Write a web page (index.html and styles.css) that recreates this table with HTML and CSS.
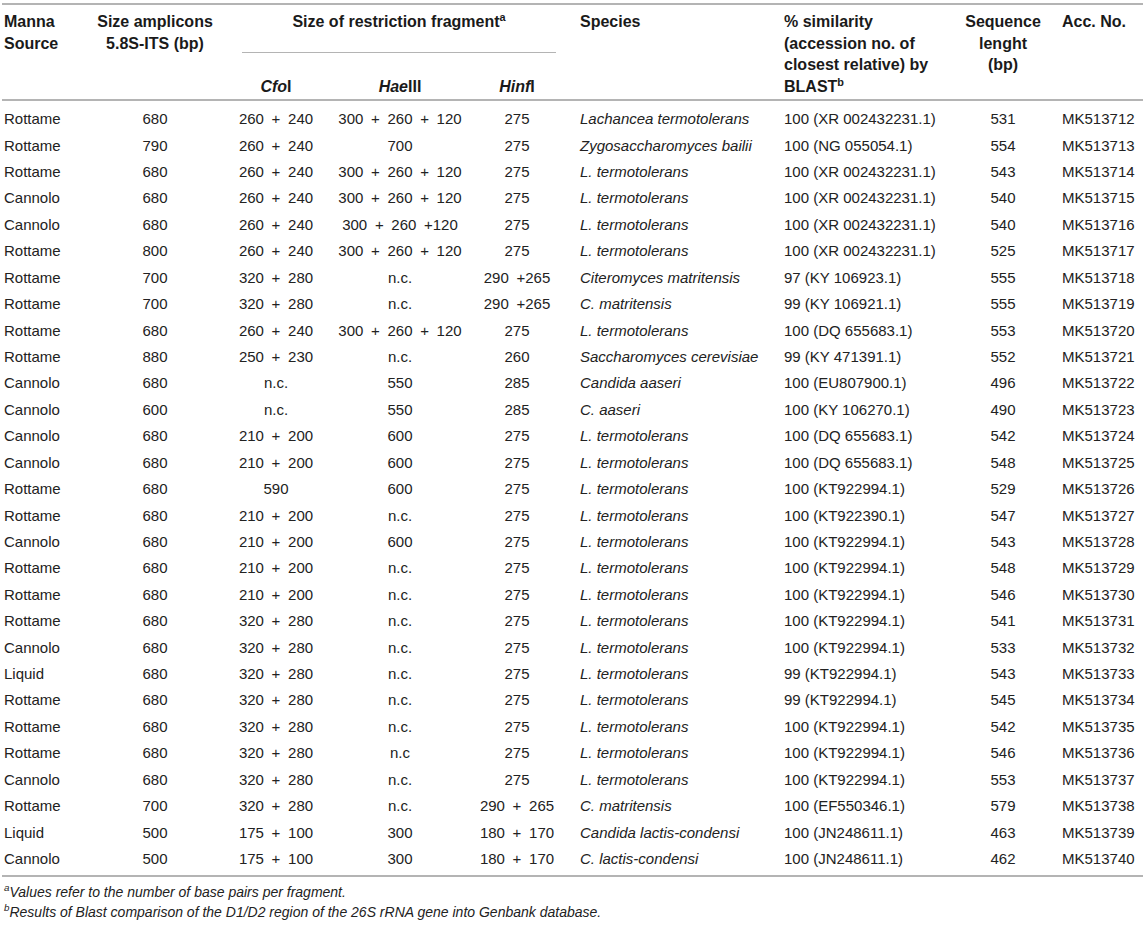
FILE: index.html
```html
<!DOCTYPE html>
<html lang="en">
<head>
<meta charset="utf-8">
<title>Yeast isolates from manna</title>
<link rel="stylesheet" href="styles.css">
</head>
<body>
<table class="tbl">
  <colgroup>
    <col class="w1"><col class="w2"><col class="w3"><col class="w4"><col class="w5"><col class="w6"><col class="w7"><col class="w8"><col class="w9">
  </colgroup>
  <thead>
    <tr class="hr1">
      <th rowspan="2" class="c1 top">Manna<br>Source</th>
      <th rowspan="2" class="ctr top">Size amplicons<br>5.8S-ITS (bp)</th>
      <th colspan="3" class="group"><div class="group-label">Size of restriction fragment<sup>a</sup></div></th>
      <th rowspan="2" class="c6 top">Species</th>
      <th rowspan="2" class="c7 top">% similarity<br>(accession no. of<br>closest relative) by<br>BLAST<sup>b</sup></th>
      <th rowspan="2" class="ctr top">Sequence<br>lenght<br>(bp)</th>
      <th rowspan="2" class="c9 top">Acc. No.</th>
    </tr>
    <tr class="hr2">
      <th class="ctr sub"><i>Cfo</i>I</th>
      <th class="ctr sub"><i>Hae</i>III</th>
      <th class="ctr sub"><i>Hinf</i>I</th>
    </tr>
  </thead>
  <tbody>
    <tr><td class="c1">Rottame</td><td class="ctr">680</td><td class="ctr">260 + 240</td><td class="ctr">300 + 260 + 120</td><td class="ctr">275</td><td class="c6"><i>Lachancea termotolerans</i></td><td class="c7">100 (XR 002432231.1)</td><td class="ctr">531</td><td class="c9">MK513712</td></tr>
    <tr><td class="c1">Rottame</td><td class="ctr">790</td><td class="ctr">260 + 240</td><td class="ctr">700</td><td class="ctr">275</td><td class="c6"><i>Zygosaccharomyces bailii</i></td><td class="c7">100 (NG 055054.1)</td><td class="ctr">554</td><td class="c9">MK513713</td></tr>
    <tr><td class="c1">Rottame</td><td class="ctr">680</td><td class="ctr">260 + 240</td><td class="ctr">300 + 260 + 120</td><td class="ctr">275</td><td class="c6"><i>L. termotolerans</i></td><td class="c7">100 (XR 002432231.1)</td><td class="ctr">543</td><td class="c9">MK513714</td></tr>
    <tr><td class="c1">Cannolo</td><td class="ctr">680</td><td class="ctr">260 + 240</td><td class="ctr">300 + 260 + 120</td><td class="ctr">275</td><td class="c6"><i>L. termotolerans</i></td><td class="c7">100 (XR 002432231.1)</td><td class="ctr">540</td><td class="c9">MK513715</td></tr>
    <tr><td class="c1">Cannolo</td><td class="ctr">680</td><td class="ctr">260 + 240</td><td class="ctr">300 + 260 +120</td><td class="ctr">275</td><td class="c6"><i>L. termotolerans</i></td><td class="c7">100 (XR 002432231.1)</td><td class="ctr">540</td><td class="c9">MK513716</td></tr>
    <tr><td class="c1">Rottame</td><td class="ctr">800</td><td class="ctr">260 + 240</td><td class="ctr">300 + 260 + 120</td><td class="ctr">275</td><td class="c6"><i>L. termotolerans</i></td><td class="c7">100 (XR 002432231.1)</td><td class="ctr">525</td><td class="c9">MK513717</td></tr>
    <tr><td class="c1">Rottame</td><td class="ctr">700</td><td class="ctr">320 + 280</td><td class="ctr">n.c.</td><td class="ctr">290 +265</td><td class="c6"><i>Citeromyces matritensis</i></td><td class="c7">97 (KY 106923.1)</td><td class="ctr">555</td><td class="c9">MK513718</td></tr>
    <tr><td class="c1">Rottame</td><td class="ctr">700</td><td class="ctr">320 + 280</td><td class="ctr">n.c.</td><td class="ctr">290 +265</td><td class="c6"><i>C. matritensis</i></td><td class="c7">99 (KY 106921.1)</td><td class="ctr">555</td><td class="c9">MK513719</td></tr>
    <tr><td class="c1">Rottame</td><td class="ctr">680</td><td class="ctr">260 + 240</td><td class="ctr">300 + 260 + 120</td><td class="ctr">275</td><td class="c6"><i>L. termotolerans</i></td><td class="c7">100 (DQ 655683.1)</td><td class="ctr">553</td><td class="c9">MK513720</td></tr>
    <tr><td class="c1">Rottame</td><td class="ctr">880</td><td class="ctr">250 + 230</td><td class="ctr">n.c.</td><td class="ctr">260</td><td class="c6"><i>Saccharomyces cerevisiae</i></td><td class="c7">99 (KY 471391.1)</td><td class="ctr">552</td><td class="c9">MK513721</td></tr>
    <tr><td class="c1">Cannolo</td><td class="ctr">680</td><td class="ctr">n.c.</td><td class="ctr">550</td><td class="ctr">285</td><td class="c6"><i>Candida aaseri</i></td><td class="c7">100 (EU807900.1)</td><td class="ctr">496</td><td class="c9">MK513722</td></tr>
    <tr><td class="c1">Cannolo</td><td class="ctr">600</td><td class="ctr">n.c.</td><td class="ctr">550</td><td class="ctr">285</td><td class="c6"><i>C. aaseri</i></td><td class="c7">100 (KY 106270.1)</td><td class="ctr">490</td><td class="c9">MK513723</td></tr>
    <tr><td class="c1">Cannolo</td><td class="ctr">680</td><td class="ctr">210 + 200</td><td class="ctr">600</td><td class="ctr">275</td><td class="c6"><i>L. termotolerans</i></td><td class="c7">100 (DQ 655683.1)</td><td class="ctr">542</td><td class="c9">MK513724</td></tr>
    <tr><td class="c1">Cannolo</td><td class="ctr">680</td><td class="ctr">210 + 200</td><td class="ctr">600</td><td class="ctr">275</td><td class="c6"><i>L. termotolerans</i></td><td class="c7">100 (DQ 655683.1)</td><td class="ctr">548</td><td class="c9">MK513725</td></tr>
    <tr><td class="c1">Rottame</td><td class="ctr">680</td><td class="ctr">590</td><td class="ctr">600</td><td class="ctr">275</td><td class="c6"><i>L. termotolerans</i></td><td class="c7">100 (KT922994.1)</td><td class="ctr">529</td><td class="c9">MK513726</td></tr>
    <tr><td class="c1">Rottame</td><td class="ctr">680</td><td class="ctr">210 + 200</td><td class="ctr">n.c.</td><td class="ctr">275</td><td class="c6"><i>L. termotolerans</i></td><td class="c7">100 (KT922390.1)</td><td class="ctr">547</td><td class="c9">MK513727</td></tr>
    <tr><td class="c1">Cannolo</td><td class="ctr">680</td><td class="ctr">210 + 200</td><td class="ctr">600</td><td class="ctr">275</td><td class="c6"><i>L. termotolerans</i></td><td class="c7">100 (KT922994.1)</td><td class="ctr">543</td><td class="c9">MK513728</td></tr>
    <tr><td class="c1">Rottame</td><td class="ctr">680</td><td class="ctr">210 + 200</td><td class="ctr">n.c.</td><td class="ctr">275</td><td class="c6"><i>L. termotolerans</i></td><td class="c7">100 (KT922994.1)</td><td class="ctr">548</td><td class="c9">MK513729</td></tr>
    <tr><td class="c1">Rottame</td><td class="ctr">680</td><td class="ctr">210 + 200</td><td class="ctr">n.c.</td><td class="ctr">275</td><td class="c6"><i>L. termotolerans</i></td><td class="c7">100 (KT922994.1)</td><td class="ctr">546</td><td class="c9">MK513730</td></tr>
    <tr><td class="c1">Rottame</td><td class="ctr">680</td><td class="ctr">320 + 280</td><td class="ctr">n.c.</td><td class="ctr">275</td><td class="c6"><i>L. termotolerans</i></td><td class="c7">100 (KT922994.1)</td><td class="ctr">541</td><td class="c9">MK513731</td></tr>
    <tr><td class="c1">Cannolo</td><td class="ctr">680</td><td class="ctr">320 + 280</td><td class="ctr">n.c.</td><td class="ctr">275</td><td class="c6"><i>L. termotolerans</i></td><td class="c7">100 (KT922994.1)</td><td class="ctr">533</td><td class="c9">MK513732</td></tr>
    <tr><td class="c1">Liquid</td><td class="ctr">680</td><td class="ctr">320 + 280</td><td class="ctr">n.c.</td><td class="ctr">275</td><td class="c6"><i>L. termotolerans</i></td><td class="c7">99 (KT922994.1)</td><td class="ctr">543</td><td class="c9">MK513733</td></tr>
    <tr><td class="c1">Rottame</td><td class="ctr">680</td><td class="ctr">320 + 280</td><td class="ctr">n.c.</td><td class="ctr">275</td><td class="c6"><i>L. termotolerans</i></td><td class="c7">99 (KT922994.1)</td><td class="ctr">545</td><td class="c9">MK513734</td></tr>
    <tr><td class="c1">Rottame</td><td class="ctr">680</td><td class="ctr">320 + 280</td><td class="ctr">n.c.</td><td class="ctr">275</td><td class="c6"><i>L. termotolerans</i></td><td class="c7">100 (KT922994.1)</td><td class="ctr">542</td><td class="c9">MK513735</td></tr>
    <tr><td class="c1">Rottame</td><td class="ctr">680</td><td class="ctr">320 + 280</td><td class="ctr">n.c</td><td class="ctr">275</td><td class="c6"><i>L. termotolerans</i></td><td class="c7">100 (KT922994.1)</td><td class="ctr">546</td><td class="c9">MK513736</td></tr>
    <tr><td class="c1">Cannolo</td><td class="ctr">680</td><td class="ctr">320 + 280</td><td class="ctr">n.c.</td><td class="ctr">275</td><td class="c6"><i>L. termotolerans</i></td><td class="c7">100 (KT922994.1)</td><td class="ctr">553</td><td class="c9">MK513737</td></tr>
    <tr><td class="c1">Rottame</td><td class="ctr">700</td><td class="ctr">320 + 280</td><td class="ctr">n.c.</td><td class="ctr">290 + 265</td><td class="c6"><i>C. matritensis</i></td><td class="c7">100 (EF550346.1)</td><td class="ctr">579</td><td class="c9">MK513738</td></tr>
    <tr><td class="c1">Liquid</td><td class="ctr">500</td><td class="ctr">175 + 100</td><td class="ctr">300</td><td class="ctr">180 + 170</td><td class="c6"><i>Candida lactis-condensi</i></td><td class="c7">100 (JN248611.1)</td><td class="ctr">463</td><td class="c9">MK513739</td></tr>
    <tr><td class="c1">Cannolo</td><td class="ctr">500</td><td class="ctr">175 + 100</td><td class="ctr">300</td><td class="ctr">180 + 170</td><td class="c6"><i>C. lactis-condensi</i></td><td class="c7">100 (JN248611.1)</td><td class="ctr">462</td><td class="c9">MK513740</td></tr>
  </tbody>
</table>
<div class="notes">
  <p class="note"><sup>a</sup>Values refer to the number of base pairs per fragment.</p>
  <p class="note"><sup>b</sup>Results of Blast comparison of the D1/D2 region of the 26S rRNA gene into Genbank database.</p>
</div>
</body>
</html>
```

FILE: styles.css
```css
html, body {
  margin: 0;
  padding: 0;
  background: #ffffff;
}

body {
  font-family: "Liberation Sans", Arial, Helvetica, sans-serif;
  color: #222222;
}

.tbl {
  margin: 3px 0 0 2px;
  width: 1141px;
  table-layout: fixed;
  border-collapse: collapse;
  border-top: 2px solid #b4b4b4;
  border-bottom: 2px solid #b4b4b4;
}

.w1 { width: 88px; }
.w2 { width: 130px; }
.w3 { width: 112px; }
.w4 { width: 136px; }
.w5 { width: 98px; }
.w6 { width: 212px; }
.w7 { width: 172px; }
.w8 { width: 106px; }
.w9 { width: 87px; }

th, td {
  padding: 0;
  white-space: nowrap;
}

thead {
  border-bottom: 2px solid #b4b4b4;
}

th {
  font-size: 16px;
  font-weight: bold;
  line-height: 21.5px;
  color: #1a1a1a;
  text-align: left;
}

th.top {
  vertical-align: top;
  padding-top: 6px;
  padding-bottom: 2px;
}

th.group {
  vertical-align: top;
  padding-top: 6px;
  text-align: center;
}

.group-label {
  margin: 0 10px 0 22px;
  padding-bottom: 19px;
  border-bottom: 1px solid #b4b4b4;
}

th.sub {
  vertical-align: bottom;
  padding-top: 19px;
  padding-bottom: 2px;
}

th i {
  font-style: italic;
}

sup {
  font-size: 0.68em;
  line-height: 0;
  vertical-align: super;
}

td {
  font-size: 15px;
  height: 26.43px;
  line-height: 18px;
  vertical-align: middle;
}

td.ctr {
  word-spacing: 3.5px;
}

tbody tr:first-child td {
  padding-top: 5px;
}

tbody tr:last-child td {
  padding-bottom: 3px;
}

.ctr { text-align: center; }
.c1 { padding-left: 2px; text-align: left; }
.c6 { padding-left: 14px; text-align: left; }
.c7 { padding-left: 6px; text-align: left; }
.c9 { padding-left: 6px; text-align: left; }

.notes {
  margin: 5px 0 0 4px;
}

.note {
  margin: 0;
  font-size: 14px;
  line-height: 20px;
  font-style: italic;
  color: #222222;
}

.note sup {
  font-size: 0.7em;
}
```
